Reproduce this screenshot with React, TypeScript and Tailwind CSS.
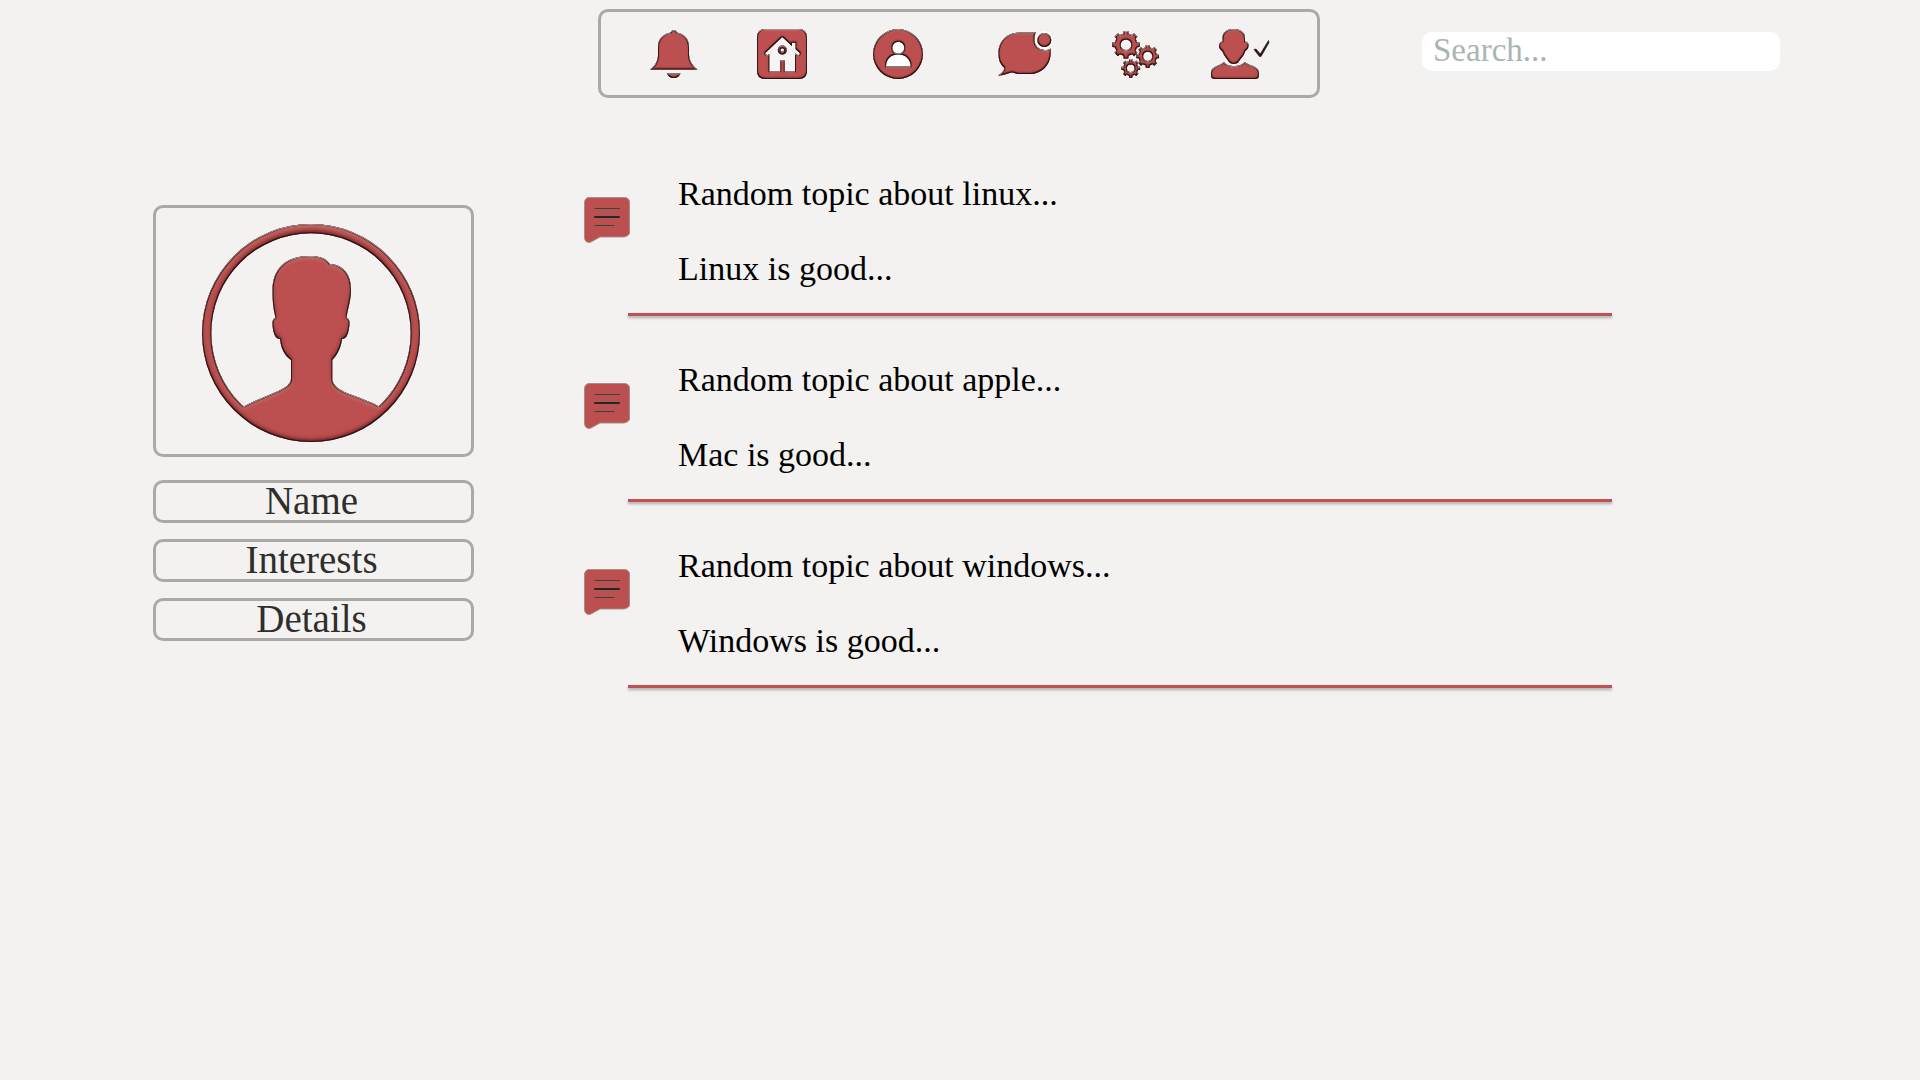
import React from "react";

type IconProps = { width: number; height: number; className?: string; children: React.ReactNode };

function Icon({ width, height, className = "", children }: IconProps) {
  return (
    <svg
      width={width}
      height={height}
      viewBox={`0 0 ${width} ${height}`}
      className={`block overflow-visible ${className}`}
      aria-hidden="true"
    >
      {children}
    </svg>
  );
}

/* Shared bevel: light from above, dark rim along the lower edges. */
function BevelFilter({ id, depth, blur }: { id: string; depth: number; blur: number }) {
  return (
    <filter id={id} x="-10%" y="-10%" width="120%" height="120%" colorInterpolationFilters="sRGB">
      <feOffset in="SourceAlpha" dx="0" dy={-depth} result="up" />
      <feGaussianBlur in="up" stdDeviation={blur} result="upBlur" />
      <feComposite in="SourceAlpha" in2="upBlur" operator="out" result="lowEdge" />
      <feFlood floodColor="#3a0d10" floodOpacity="0.85" />
      <feComposite in2="lowEdge" operator="in" result="low" />
      <feOffset in="SourceAlpha" dx="0" dy={depth} result="down" />
      <feGaussianBlur in="down" stdDeviation={blur} result="downBlur" />
      <feComposite in="SourceAlpha" in2="downBlur" operator="out" result="highEdge" />
      <feFlood floodColor="#d98684" floodOpacity="0.8" />
      <feComposite in2="highEdge" operator="in" result="high" />
      <feMorphology in="SourceAlpha" operator="erode" radius="1" result="small" />
      <feComposite in="SourceAlpha" in2="small" operator="out" result="rimEdge" />
      <feFlood floodColor="#1d0c0d" floodOpacity="0.8" />
      <feComposite in2="rimEdge" operator="in" result="rim" />
      <feOffset in="SourceAlpha" dx="0" dy="1" result="down1" />
      <feComposite in="SourceAlpha" in2="down1" operator="out" result="topEdge" />
      <feFlood floodColor="#a09493" />
      <feComposite in2="topEdge" operator="in" result="top" />
      <feMerge>
        <feMergeNode in="SourceGraphic" />
        <feMergeNode in="high" />
        <feMergeNode in="low" />
        <feMergeNode in="rim" />
        <feMergeNode in="top" />
      </feMerge>
    </filter>
  );
}

const circle = (cx: number, cy: number, r: number) =>
  `M${cx - r} ${cy}a${r} ${r} 0 1 0 ${2 * r} 0a${r} ${r} 0 1 0 ${-2 * r} 0Z`;

function gear(cx: number, cy: number, outer: number, root: number, hole: number, teeth: number) {
  const pts: string[] = [];
  const step = (Math.PI * 2) / teeth;
  for (let i = 0; i < teeth; i++) {
    const a = i * step - Math.PI / 2;
    const corners: [number, number][] = [
      [root, -0.28],
      [outer, -0.22],
      [outer, 0.22],
      [root, 0.28],
    ];
    corners.forEach(([r, k]) => {
      pts.push(`${(cx + r * Math.cos(a + k * step)).toFixed(2)} ${(cy + r * Math.sin(a + k * step)).toFixed(2)}`);
    });
  }
  return `M${pts.join("L")}Z${circle(cx, cy, hole)}`;
}

const bevelled = { fill: "#bc4f4f", fillRule: "evenodd" as const, filter: "url(#bevel)" };

const BellIcon = () => (
  <Icon width={48} height={48}>
    <path
      {...bevelled}
      d="M24 0C25.500 0 26.500 1 27 2.500C34.500 4 39 9 39 17V25C39.500 32 43 36 47.500 39.500H0C5 36 8 31 8 25V17C8 9 13 4 20.500 2.500C21.500 1 22 0 24 0ZM17 43.500H30.500C29 46.500 27 48 23.700 48C20 48 18 46 17 43.500Z"
    />
  </Icon>
);

const HomeIcon = () => (
  <Icon width={50} height={50}>
    <rect x="6" y="6" width="38" height="38" fill="#f6f5f4" />
    <path
      {...bevelled}
      d={
        "M8 0H42C47 0 50 3 50 8V42C50 47 47 50 42 50H8C3 50 0 47 0 42V8C0 3 3 0 8 0ZM25.300 8L8 24.300L10 26.300L12.300 25V42.300H23.300V31.300H27.700V42.300H38V24.500L41.500 26.300L43 24.300L38.500 20V13.700H35V17Z" +
        circle(25.3, 21, 4.5) +
        circle(25.3, 21, 1.8)
      }
    />
  </Icon>
);

const ProfileIcon = () => (
  <Icon width={50} height={50}>
    <circle cx="25" cy="25" r="18" fill="#ffffff" />
    <path
      {...bevelled}
      d={circle(25, 25, 25) + circle(25.3, 18.7, 6) + "M13 37.500C13 30 18 25.500 25.300 25.500S37.700 30 37.700 37.500Z"}
    />
  </Icon>
);

const ChatIcon = () => (
  <Icon width={53} height={44}>
    <circle cx="46.3" cy="8" r="9" fill="#ffffff" />
    <path
      {...bevelled}
      d={
        "M38 0.500C37 1.500 36.500 4 36.500 7A10 10 0 0 0 47 18C49.500 18 51 17.500 52.700 16.500V22C52 34 43 42 32 42H20C18 42 16 40 13 40.500C9 42 5 43.500 0 43.500C4 41 6 39 6.500 36C2 32 0.500 28 0.500 21C0.500 9 9 0.500 22 0.500Z" +
        circle(46.3, 8, 7)
      }
    />
  </Icon>
);

const SettingsIcon = () => (
  <Icon width={47} height={47}>
    <path
      {...bevelled}
      d={
        gear(14, 13.7, 14, 11.4, 5.3, 8) + gear(35.7, 25.3, 11.5, 9.3, 4.6, 8) + gear(18.7, 37.3, 9.5, 7.6, 3.8, 8)
      }
    />
  </Icon>
);

const AccountIcon = () => (
  <Icon width={58} height={50}>
    <path
      {...bevelled}
      d="M22.500 0C29 0 34 3 34 9V12.500C38 13 38.500 17 36.500 20L34 22.500C33 27 30 29 27.500 33C25.500 35.500 20 35.500 18 33C15.500 29 13 27 11.500 22.500L9 20C7 17 8 13 11.500 12.500V9C11.500 3 16 0 22.500 0ZM13 33C16 38.500 30 38.500 33.500 33C39 37 47 37 48 43V46C48 49 46.500 50 44 50H4C1.500 50 0 49 0 46V43C1 37 9 37 13 33Z"
    />
    <path d="M43 20.500L45 20L49.300 25L57.500 11.500L58 13.500L50 27.500H48.500Z" fill="#2a1416" stroke="#2a1416" strokeWidth="0.7" />
  </Icon>
);

const navItems = [
  { label: "Notifications", icon: <BellIcon />, space: "ml-[49px]" },
  { label: "Home", icon: <HomeIcon />, space: "ml-[59px]" },
  { label: "Profile", icon: <ProfileIcon />, space: "ml-[66px]" },
  { label: "Messages", icon: <ChatIcon />, space: "ml-[75px]" },
  { label: "Settings", icon: <SettingsIcon />, space: "ml-[61px]" },
  { label: "Account", icon: <AccountIcon />, space: "ml-[52px]" },
];

const Avatar = () => (
  <Icon width={218} height={218}>
    <g fill="#bc4f4f" filter="url(#bevel-large)">
      <path fillRule="evenodd" d={circle(109, 109, 109) + circle(109, 109, 99.7)} />
      <path d="M108 32C117 32 124 34 128 40C143 41 149 52 149 66C149 76 146 84 144.500 93.500C148 95 148 99 147 104C146 111 144 115 140 115C139 124 135 131 130.300 136V156C132 163 139 167 150 171C160 175 170 178 178 183L182 186A105 105 0 0 1 36 186L41 183C49 178 58 175 67 171C80 166 89 161 89 155V136C82 131 79 124 78 115C74 115 72 111 71 105C70 99 70 95 73.500 93.500C71 84 70.500 76 70.500 67C70.500 44 84 32 108 32Z" />
    </g>
  </Icon>
);

const TopicIcon = () => (
  <Icon width={46} height={46} className="mt-[23px] shrink-0">
    <path
      d="M5 0.500H40.500C43.500 0.500 45.500 2.500 45.500 5V36C45.500 38 42 40 39 40H16L7 45C3 46.500 0.500 44 0.500 40V6C0.500 3 2 0.500 5 0.500Z"
      fill="#bc4f4f"
      stroke="#a58f8b"
      strokeWidth="1"
    />
    <g stroke="#2b4a44" strokeLinecap="round">
      <path d="M11 11.500H35.500" strokeWidth="1" />
      <path d="M11 20H35" strokeWidth="2" stroke="#1c2c2c" />
      <path d="M11 28.500H30" strokeWidth="1" />
    </g>
  </Icon>
);

const topics = [
  { title: "Random topic about linux...", body: "Linux is good..." },
  { title: "Random topic about apple...", body: "Mac is good..." },
  { title: "Random topic about windows...", body: "Windows is good..." },
];

export default function App() {
  return (
    <div className="min-h-screen bg-[#f3f2f0] font-['Georgia','Liberation_Serif',serif] text-black">
      <svg width="0" height="0" className="absolute" aria-hidden="true">
        <defs>
          <BevelFilter id="bevel" depth={1} blur={1} />
          <BevelFilter id="bevel-large" depth={2} blur={2} />
        </defs>
      </svg>

      <header className="grid grid-cols-[598fr_722fr_102fr_358fr_140fr] pt-[9px]">
        <nav
          aria-label="Main"
          className="col-start-2 flex items-center rounded-[10px] border-[3px] border-[#aaa9a8] pt-[17px] pb-[16px]"
        >
          {navItems.map((item) => (
            <button key={item.label} type="button" aria-label={item.label} className={`cursor-pointer ${item.space}`}>
              {item.icon}
            </button>
          ))}
        </nav>
        <input
          type="search"
          aria-label="Search"
          placeholder="Search..."
          className="col-start-4 mt-[23px] h-[39px] w-full self-start rounded-[10px] bg-white px-[11px] pb-[2px] text-[33px] leading-[37px] outline-none placeholder:text-[#a9b5b2]"
        />
      </header>

      <main className="grid grid-cols-[153fr_321fr_110fr_1028fr_308fr] items-start">
        <aside className="col-start-2 flex flex-col gap-4 pt-[107px]">
          <div className="mb-[7px] flex justify-center rounded-[10px] border-[3px] border-[#aaa9a8] pt-[16px] pr-[6px] pb-[12px]">
            <Avatar />
          </div>
          {["Name", "Interests", "Details"].map((label) => (
            <button
              key={label}
              type="button"
              className="cursor-pointer rounded-[10px] border-[3px] border-[#aaa9a8] pr-1 pb-[2px] text-center text-[39px] leading-[35px] text-[#2e2e2c]"
            >
              {label}
            </button>
          ))}
        </aside>

        <section aria-label="Topics" className="col-start-4 flex flex-col gap-[44px] pt-[76px]">
          {topics.map((topic) => (
            <article key={topic.title}>
              <div className="flex gap-[48px] pb-[24px]">
                <TopicIcon />
                <div className="flex flex-col gap-[35px] text-[34px] leading-[40px]">
                  <h2>{topic.title}</h2>
                  <p>{topic.body}</p>
                </div>
              </div>
              <hr className="ml-[44px] h-[3px] border-0 bg-[#c05053] shadow-[0_2px_3px_rgba(0,0,0,0.3)]" />
            </article>
          ))}
        </section>
      </main>
    </div>
  );
}
